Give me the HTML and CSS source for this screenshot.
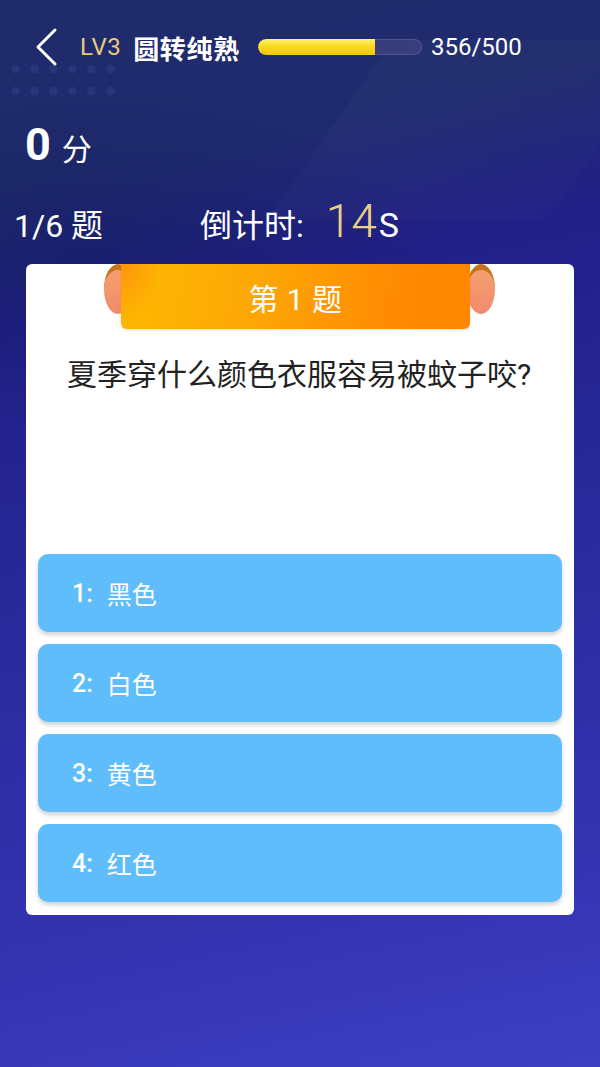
FILE: index.html
```html
<!DOCTYPE html>
<html lang="zh">
<head>
<meta charset="utf-8">
<link rel="stylesheet" href="styles.css">
</head>
<body>
<div class="page">
  <div class="deco-dots"></div>
  <div class="deco-band"></div>
  <header class="topbar">
    <svg class="back" width="26" height="40" viewBox="0 0 26 40"><polyline points="21,3 4,20 21,37" fill="none" stroke="#fff" stroke-width="3" stroke-linecap="round" stroke-linejoin="round"/></svg>
    <span class="lv">LV3</span>
    <span class="rank">圆转纯熟</span>
    <div class="bar"><div class="fill" style="width:71.2%"></div></div>
    <span class="exp">356/500</span>
  </header>
  <div class="score"><span class="num">0</span><span class="unit">分</span></div>
  <div class="stats">
    <span class="count">1/6 题</span>
    <span class="timer">倒计时:<span class="sec">14</span><span class="s">S</span></span>
  </div>
  <main class="card">
    <div class="ribbon"><span>第 1 题</span></div>
    <div class="question">夏季穿什么颜色衣服容易被蚊子咬?</div>
    <div class="options">
      <div class="opt"><b>1:</b> 黑色</div>
      <div class="opt"><b>2:</b> 白色</div>
      <div class="opt"><b>3:</b> 黄色</div>
      <div class="opt"><b>4:</b> 红色</div>
    </div>
  </main>
</div>
</body>
</html>
```
FILE: styles.css
```css
html, body {
  margin: 0;
  padding: 0;
}
body {
  width: 600px;
  height: 1067px;
  overflow: hidden;
  font-family: Roboto, "Noto Sans CJK SC", sans-serif;
  color: #fff;
}
.page {
  position: relative;
  width: 600px;
  height: 1067px;
  overflow: hidden;
  background:
    radial-gradient(ellipse 520px 240px at 90px 260px, rgba(12,22,80,0.35), rgba(12,22,80,0) 70%),
    linear-gradient(168deg, #1f2b6a 0%, #1f2b6e 16%, #211f88 28%, #2a2c9f 58%, #3434b2 82%, #3d3fc3 100%);
}
.deco-dots {
  position: absolute;
  left: 6px;
  top: 58px;
  width: 112px;
  height: 44px;
  background-image: radial-gradient(circle, rgba(90,110,200,0.16) 4px, transparent 4.5px);
  background-size: 19px 22px;
}
.deco-band {
  position: absolute;
  left: 330px;
  top: 40px;
  width: 280px;
  height: 180px;
  background: linear-gradient(135deg, rgba(255,255,255,0.025), rgba(255,255,255,0.01));
  transform: skewX(-35deg);
}
.topbar {
  position: relative;
  display: flex;
  align-items: center;
  height: 94px;
  padding-left: 34px;
  box-sizing: border-box;
}
.back {
  flex: none;
  margin-right: 20px;
}
.lv {
  font-size: 24px;
  color: #e8c97f;
  margin-right: 12px;
  letter-spacing: 0.5px;
}
.rank {
  font-size: 26px;
  font-weight: 700;
  margin-right: 18px;
  letter-spacing: 0.7px;
}
.bar {
  width: 164px;
  height: 16px;
  border-radius: 8px;
  background: #3a3d7c;
  box-shadow: inset 0 0 0 1px rgba(120,130,200,0.35);
  overflow: hidden;
  margin-right: 9px;
  flex: none;
}
.fill {
  height: 100%;
  border-radius: 8px 0 0 8px;
  background: linear-gradient(180deg, #fff07a 0%, #f9dc1a 45%, #efc80a 100%);
}
.exp {
  font-size: 24px;
}
.score {
  position: relative;
  height: 86px;
  display: flex;
  align-items: baseline;
  padding-left: 25px;
  padding-top: 24px;
  box-sizing: border-box;
}
.num {
  font-size: 45px;
  font-weight: 700;
  margin-right: 11px;
}
.unit {
  font-size: 30px;
}
.stats {
  position: relative;
  height: 84px;
  display: flex;
  align-items: baseline;
  padding-left: 14px;
  padding-top: 14px;
  box-sizing: border-box;
}
.count {
  font-size: 32px;
  width: 186px;
}
.timer {
  font-size: 32px;
}
.sec {
  font-size: 46px;
  color: #efd185;
  font-weight: 300;
  margin-left: 22px;
  margin-right: 2px;
}
.s {
  font-size: 34px;
}
.card {
  position: relative;
  z-index: 0;
  margin: 0 26px;
  height: 651px;
  background: #fff;
  border-radius: 6px;
  display: flex;
  flex-direction: column;
  align-items: center;
}
.ribbon {
  position: relative;
  width: 349px;
  height: 65px;
  margin-right: 9px;
  border-radius: 0 0 6px 6px;
  background:
    radial-gradient(ellipse 40px 62px at 0 0, rgba(255,120,20,0.55), rgba(255,120,20,0) 100%),
    linear-gradient(100deg, #fdb900 0%, #fda606 40%, #ff8c02 75%, #ff8600 100%);
  display: flex;
  align-items: center;
  justify-content: center;
  box-shadow: 0 1px 3px rgba(200,110,0,0.25);
}
.ribbon::before,
.ribbon::after {
  content: "";
  position: absolute;
  top: 0;
  width: 28px;
  height: 44px;
  border-radius: 50%;
  background: linear-gradient(180deg, #f5a070, #f28a6c);
  border-top: 6px solid #c3731c;
  z-index: -1;
}
.ribbon::before {
  left: -17px;
}
.ribbon::after {
  right: -25px;
}
.ribbon span {
  font-size: 30px;
  color: #fff;
  letter-spacing: 0.5px;
}
.question {
  margin-top: 26px;
  height: 199px;
  font-size: 30px;
  line-height: 40px;
  color: #222;
  text-align: center;
  margin-right: 2px;
}
.options {
  align-self: stretch;
  display: flex;
  flex-direction: column;
  gap: 12px;
  padding: 0 12px;
}
.opt {
  height: 78px;
  border-radius: 10px;
  background: #60bdfb;
  box-shadow: 0 3px 4px rgba(0,0,0,0.18);
  display: flex;
  align-items: center;
  padding-left: 34px;
  font-size: 25px;
  color: #fff;
}
.opt b {
  font-weight: 500;
  margin-right: 14px;
}
```
